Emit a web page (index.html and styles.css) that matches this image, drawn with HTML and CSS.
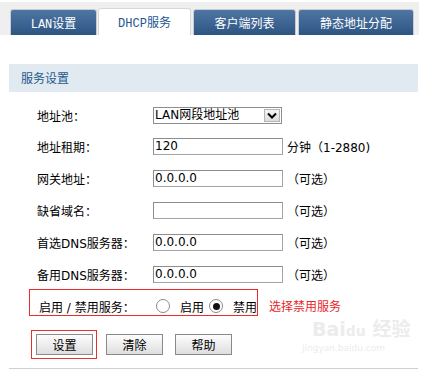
FILE: index.html
```html
<!DOCTYPE html>
<html>
<head>
<meta charset="utf-8">
<link rel="stylesheet" href="styles.css">
</head>
<body>
<div class="page">
  <div class="tabbar">
    <div class="tab t1">LAN设置</div>
    <div class="tab active t2">DHCP服务</div>
    <div class="tab t3">客户端列表</div>
    <div class="tab t4">静态地址分配</div>
  </div>
  <div class="section">服务设置</div>
  <div class="form">
    <div class="row first">
      <span class="label">地址池：</span>
      <div class="select"><span class="sel-text">LAN网段地址池</span><span class="sel-btn"><svg width="10" height="7" viewBox="0 0 10 7"><path d="M1 1.5 L5 5.5 L9 1.5" fill="none" stroke="#000" stroke-width="2"/></svg></span></div>
    </div>
    <div class="row">
      <span class="label">地址租期：</span>
      <div class="input">120</div>
      <span class="hint">分钟（1-2880)</span>
    </div>
    <div class="row">
      <span class="label">网关地址：</span>
      <div class="input">0.0.0.0</div>
      <span class="hint">（可选）</span>
    </div>
    <div class="row">
      <span class="label">缺省域名：</span>
      <div class="input"></div>
      <span class="hint">（可选）</span>
    </div>
    <div class="row">
      <span class="label">首选DNS服务器：</span>
      <div class="input">0.0.0.0</div>
      <span class="hint">（可选）</span>
    </div>
    <div class="row">
      <span class="label">备用DNS服务器：</span>
      <div class="input">0.0.0.0</div>
      <span class="hint">（可选）</span>
    </div>
    <div class="enable-row">
      <div class="enable-box">
        <span class="label2">启用 / 禁用服务：</span>
        <span class="radio"></span><span class="rlabel">启用</span>
        <span class="radio checked"></span><span class="rlabel">禁用</span>
      </div>
      <span class="note">选择禁用服务</span>
    </div>
    <div class="buttons">
      <div class="btn-box"><div class="btn">设置</div></div>
      <div class="btn">清除</div>
      <div class="btn">帮助</div>
    </div>
  </div>
  <div class="bottom-line"></div>
  <div class="watermark">
    <div class="wm-logo">Bai<span class="wm-du">du</span> 经验</div>
    <div class="wm-url">jingyan.baidu.com</div>
  </div>
</div>
</body>
</html>
```
FILE: styles.css
```css
html, body {
  margin: 0;
  padding: 0;
  background: #fff;
}
body {
  font-family: "DejaVu Sans", "Noto Sans CJK SC", sans-serif;
  font-size: 12px;
  color: #000;
}
.page {
  position: relative;
  width: 430px;
  height: 370px;
  overflow: hidden;
}
.tabbar {
  margin-top: 2px;
  width: 409px;
  height: 33px;
  padding-left: 10px;
  background: #efefef;
  display: flex;
  align-items: flex-end;
  gap: 1px;
}
.tab {
  height: 26px;
  box-sizing: border-box;
  display: flex;
  align-items: center;
  justify-content: center;
  font-family: "Liberation Mono", "Noto Sans CJK SC", monospace;
  font-size: 12px;
  color: #fff;
  background: linear-gradient(#4f76a3, #2d5583);
  border: 1px solid #c8ccd2;
  border-bottom: none;
  border-radius: 3px 3px 0 0;
}
.tab.active {
  height: 27px;
  background: #fff;
  color: #1c5792;
  border-color: #d8d8d8;
}
.t1 { width: 87px; }
.t2 { width: 93px; margin-right: 1px; }
.t3 { width: 103px; margin-right: 1px; font-family: "Noto Sans CJK SC", sans-serif; }
.t4 { width: 116px; font-family: "Noto Sans CJK SC", sans-serif; }
.section {
  margin: 29px 0 0 9px;
  width: 397px;
  height: 28px;
  padding-left: 12px;
  background: #e1e9f1;
  color: #24598c;
  font-family: "Noto Sans CJK SC", sans-serif;
  font-size: 12px;
  line-height: 28px;
}
.form {
  padding-left: 37px;
  padding-top: 8px;
}
.row {
  display: flex;
  align-items: center;
  height: 32px;
  white-space: nowrap;
}
.row.first {
  height: 30px;
}
.label {
  width: 116px;
  flex: none;
}
.input {
  width: 130px;
  height: 17px;
  flex: none;
  box-sizing: border-box;
  border: 1px solid #a3a3a3;
  border-top-color: #8c8c8c;
  border-left-color: #8c8c8c;
  padding-left: 1px;
  line-height: 15px;
  font-size: 12px;
  color: #000;
}
.hint {
  margin-left: 4px;
}
.select {
  width: 129px;
  height: 17px;
  flex: none;
  box-sizing: border-box;
  border: 1px solid #8e8e8e;
  display: flex;
  align-items: center;
  justify-content: space-between;
  padding-left: 1px;
}
.sel-text {
  line-height: 15px;
}
.sel-btn {
  width: 16px;
  height: 13px;
  margin-right: 1px;
  box-sizing: border-box;
  border: 1px solid #b5b5b5;
  background: linear-gradient(#f5f5f5, #dcdcdc);
  display: flex;
  align-items: center;
  justify-content: center;
}
.enable-row {
  display: flex;
  align-items: center;
  margin-top: -1px;
  margin-left: -8px;
  white-space: nowrap;
}
.enable-box {
  width: 229px;
  height: 27px;
  flex: none;
  box-sizing: border-box;
  box-shadow: inset 0 0 0 1px #ee2a2a;
  display: flex;
  align-items: center;
  padding: 7px 0 0 10px;
}
.label2 {
  width: 117px;
  flex: none;
}
.radio {
  width: 14px;
  height: 14px;
  flex: none;
  box-sizing: border-box;
  border: 1px solid #8a8a8a;
  border-radius: 50%;
  background: #fff;
  display: flex;
  align-items: center;
  justify-content: center;
  margin-right: 10px;
}
.radio.checked::after {
  content: "";
  width: 7px;
  height: 7px;
  border-radius: 50%;
  background: #111;
}
.rlabel {
  flex: none;
  margin-right: 5px;
}
.note {
  margin-left: 11px;
  margin-top: 6px;
  color: #e8262b;
  font-family: "Noto Sans CJK SC", sans-serif;
}
.buttons {
  display: flex;
  align-items: center;
  margin-top: 14px;
  margin-left: -6px;
  gap: 12px;
}
.btn-box {
  border: 1px solid #e8302f;
  padding: 3px 3px 3px 4px;
  margin-right: -3px;
}
.btn {
  width: 57px;
  height: 21px;
  box-sizing: border-box;
  border: 1px solid #8a8a8a;
  background: linear-gradient(#fdfdfd, #dedede);
  display: flex;
  align-items: center;
  justify-content: center;
  font-family: "Noto Sans CJK SC", sans-serif;
}
.bottom-line {
  position: absolute;
  left: 9px;
  top: 368px;
  width: 409px;
  height: 1px;
  background: #cfcfcf;
}
.watermark {
  position: absolute;
  left: 312px;
  top: 318px;
  color: #ececec;
  font-family: "DejaVu Sans", "Noto Sans CJK SC", sans-serif;
}
.wm-logo {
  font-size: 19px;
  font-weight: bold;
  line-height: 22px;
}
.wm-du {
  font-size: 14px;
}
.wm-url {
  font-size: 9px;
  margin-left: -10px;
  line-height: 12px;
}
```
